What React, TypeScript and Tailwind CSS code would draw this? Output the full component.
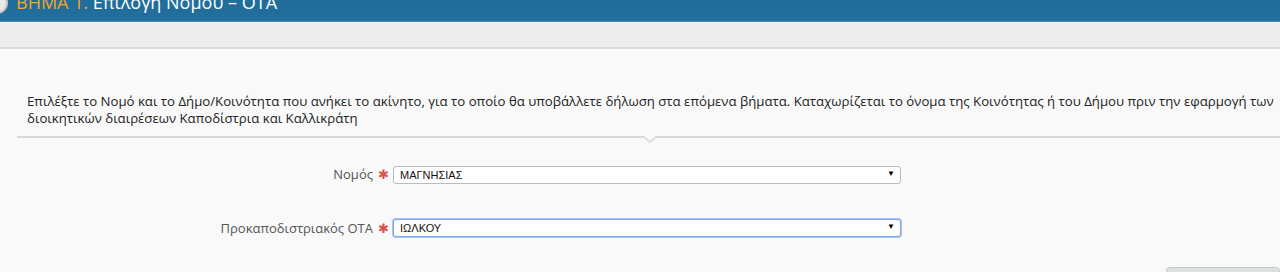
import React from "react";

function Sel({ value, focused }: { value: string; focused?: boolean }) {
  return (
    <div
      className={`relative w-[508px] h-[18px] bg-white rounded-[3px] border flex items-center pl-[6px] text-[11px] text-[#111] ${
        focused ? "border-[#7fa6e6] shadow-[0_0_0_1px_#a9c4f0]" : "border-[#b9bdbd]"
      }`}
      style={{ fontFamily: '"Liberation Sans", Arial, sans-serif' }}
    >
      <span>{value}</span>
      <span className="absolute right-[5px] top-[1px] text-[8px] text-black">▼</span>
    </div>
  );
}

export default function App() {
  return (
    <div
      className="w-[1280px] h-[272px] overflow-hidden bg-[#f9f9f9] flex flex-col"
      style={{ fontFamily: '"Open Sans", "Noto Sans", sans-serif' }}
    >
      <div className="shrink-0 h-[22px] bg-gradient-to-b from-[#1f6d9b] to-[#236f9e] border-b border-[#4b88b0] relative overflow-hidden">
        <div className="absolute left-[-14px] top-[-8px] w-[22px] h-[22px] rounded-full bg-[#e9ebeb] border-2 border-[#c3c8c9]" />
        <div className="pl-[16px] text-[18px] leading-none -translate-y-[7px] whitespace-nowrap">
          <span className="text-[#f5a623]">ΒΗΜΑ 1.</span>
          <span className="text-white"> Επιλογή Νομού – ΟΤΑ</span>
        </div>
      </div>
      <div className="shrink-0 h-[27px] bg-[#ecedec] border-b-2 border-[#d9dddd]" />
      <div className="shrink-0 pt-[44px] pl-[27px] pr-[2px] text-[13.2px] leading-[17px] text-[#222]">
        Επιλέξτε το Νομό και το Δήμο/Κοινότητα που ανήκει το ακίνητο, για το οποίο θα υποβάλλετε δήλωση στα επόμενα βήματα. Καταχωρίζεται το όνομα της Κοινότητας ή του Δήμου πριν την εφαρμογή των διοικητικών διαιρέσεων Καποδίστρια και Καλλικράτη
      </div>
      <div className="shrink-0 relative ml-[17px] mt-[9px] h-[2px] bg-[#d4dada]">
        <svg className="absolute left-[626px] top-0" width="14" height="8" viewBox="0 0 14 8">
          <path d="M0 0 L7 6 L14 0" fill="#f9f9f9" stroke="#d4dada" strokeWidth="1.5" />
        </svg>
      </div>
      <div className="shrink-0 mt-[27px] flex flex-col gap-[34px]">
        <div className="flex items-center">
          <div className="w-[373px] text-right text-[13px] text-[#555]">Νομός</div>
          <span className="w-[20px] text-center text-[#d9534f] text-[13px]">✱</span>
          <Sel value="ΜΑΓΝΗΣΙΑΣ" />
        </div>
        <div className="flex items-center">
          <div className="w-[373px] text-right text-[13px] text-[#555]">Προκαποδιστριακός ΟΤΑ</div>
          <span className="w-[20px] text-center text-[#d9534f] text-[13px]">✱</span>
          <Sel value="ΙΩΛΚΟΥ" focused />
        </div>
      </div>
      <div className="shrink-0 flex justify-end mt-[29px]">
        <div className="w-[114px] h-[20px] bg-[#dde1e1] border border-[#c4cbcb] rounded-[4px]" />
      </div>
    </div>
  );
}
